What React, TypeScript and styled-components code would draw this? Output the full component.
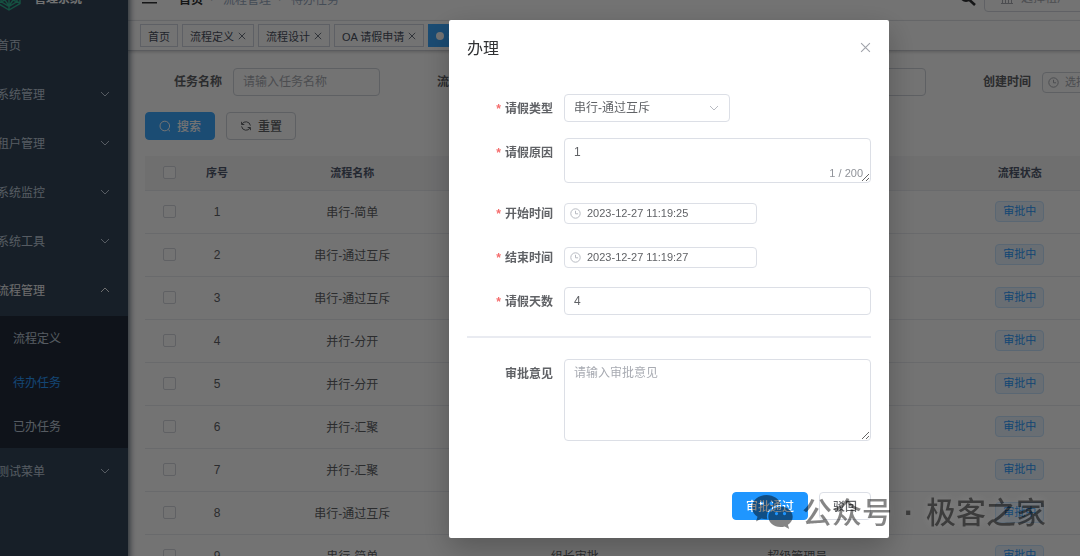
import React from 'react';
import styled, { createGlobalStyle, css } from 'styled-components';

const Global = createGlobalStyle`
  *, *::before, *::after { box-sizing: border-box; }
  body { margin: 0; background: #fff; overflow: hidden; }
  body, button, input, textarea, select {
    font-family: "Liberation Sans", "Noto Sans CJK SC", sans-serif;
    font-size: 12px;
    color: #606266;
  }
  button { cursor: pointer; }
  a { color: inherit; text-decoration: none; }
`;

/* ---------- page shell ---------- */

const Page = styled.div`
  height: 100vh;
  overflow: hidden;
`;

const Shell = styled.div`
  display: flex;
  min-height: 100vh;
  margin: -24px 0 0 -48px;
`;

const Sidebar = styled.aside`
  flex: 0 0 176px;
  min-height: calc(100vh + 24px);
  background: #34465a;
  box-shadow: 2px 0 6px rgba(0, 21, 41, 0.6);
  z-index: 1;
`;

const Brand = styled.div`
  display: flex;
  align-items: center;
  gap: 12px;
  height: 46px;
  padding: 0 0 4px 44px;
  color: #fff;
  font-weight: 700;
`;

const menuRow = css`
  display: flex;
  align-items: center;
  width: 100%;
  border: 0;
  background: none;
  text-align: left;
`;

const MenuItem = styled.button<{ $open?: boolean }>`
  ${menuRow}
  justify-content: space-between;
  height: 49px;
  padding: 0 17px 4px 45px;
  color: ${(p) => (p.$open ? '#f4f4f5' : '#bfcbd9')};
`;

const SubMenu = styled.nav`
  background: #232c3a;
`;

const SubItem = styled.a<{ $active?: boolean }>`
  ${menuRow}
  height: 44px;
  padding: 0 0 2px 61px;
  color: ${(p) => (p.$active ? '#2b9bff' : '#bfcbd9')};
`;

const Main = styled.main`
  flex: 1 0 1020px;
  background: #fff;
`;

/* ---------- header ---------- */

const Header = styled.header`
  display: flex;
  align-items: center;
  height: 45px;
  padding: 0 24px 0 14px;
  border-bottom: 1px solid #e8eaee;
`;

const IconButton = styled.button`
  display: flex;
  padding: 0;
  border: 0;
  background: none;
  color: #303133;
`;

const Crumbs = styled.nav`
  display: flex;
  gap: 8px;
  margin: 0 auto 0 22px;
  color: #97a8be;
  a { color: #303133; font-weight: 700; }
  i { color: #c0c4cc; font-style: normal; width: 4px; }
`;

const Tenant = styled.label`
  display: flex;
  align-items: center;
  gap: 8px;
  width: 140px;
  height: 28px;
  margin-left: 8px;
  padding: 0 16px;
  border: 1px solid #d4d8e0;
  border-radius: 4px;
  color: #a8abb2;
  input { width: 84px; padding: 0; border: 0; outline: 0; background: none; }
  input::placeholder { color: #a8abb2; }
`;

const TagBar = styled.div`
  display: flex;
  gap: 4px;
  height: 30px;
  padding: 3px 12px;
  border-bottom: 1px solid #c8cad0;
  box-shadow: 0 1px 3px rgba(0, 0, 0, 0.2);
`;

const PageTag = styled.a<{ $active?: boolean }>`
  display: flex;
  align-items: center;
  gap: 4px;
  height: 23px;
  padding: 0 7px;
  border: 1px solid ${(p) => (p.$active ? '#3ca8ff' : '#d0d6e0')};
  background: ${(p) => (p.$active ? '#3ca8ff' : '#fff')};
  color: ${(p) => (p.$active ? '#fff' : '#495060')};
  font-size: 11px;
  white-space: nowrap;
`;

const Dot = styled.span`
  width: 8px;
  height: 8px;
  border-radius: 50%;
  background: #fff;
`;

/* ---------- list page ---------- */

const Content = styled.div`
  padding: 17px;
`;

const Filters = styled.form`
  display: flex;
  gap: 28px;
  margin-bottom: 16px;
`;

const Filter = styled.label`
  display: flex;
  align-items: center;
  flex: none;
  gap: 11px;
  height: 28px;
  padding-left: 29px;
  font-weight: 700;
  line-height: 16px;
`;

const control = css`
  border: 1px solid #dcdfe6;
  border-radius: 4px;
  background: #fff;
  outline: 0;
  &::placeholder { color: #a8abb2; }
`;

const TextInput = styled.input<{ $width?: number }>`
  ${control}
  width: ${(p) => (p.$width ? `${p.$width}px` : '100%')};
  height: 28px;
  padding: 0 9px;
`;

const FilterInput = styled(TextInput)`
  border-color: #d0d4dc;
`;

const DateBox = styled.span<{ $dim?: boolean }>`
  ${control}
  display: flex;
  align-items: center;
  gap: 6px;
  width: 193px;
  height: 21px;
  padding: 0 5px;
  color: ${(p) => (p.$dim ? '#a8abb2' : '#b8bbc2')};
  border-color: ${(p) => (p.$dim ? '#d0d4dc' : '#dcdfe6')};
  input {
    width: 150px;
    padding: 0;
    border: 0;
    outline: 0;
    background: none;
    font-size: 11px;
  }
  input::placeholder { color: #a8abb2; }
`;

const Actions = styled.div`
  display: flex;
  gap: 11px;
  margin-bottom: 16px;
`;

const Button = styled.button<{ $primary?: boolean; $dim?: boolean }>`
  display: inline-flex;
  align-items: center;
  justify-content: center;
  gap: 6px;
  height: 28px;
  padding: 0 13px 1px;
  border: 1px solid ${(p) => (p.$primary ? (p.$dim ? '#3ca8ff' : '#1f96ff') : p.$dim ? '#d0d4dc' : '#dcdfe6')};
  border-radius: 4px;
  background: ${(p) => (p.$primary ? (p.$dim ? '#3ca8ff' : '#1f96ff') : '#fff')};
  color: ${(p) => (p.$primary ? '#fff' : '#606266')};
  font-weight: 500;
`;

const Table = styled.table`
  width: 100%;
  min-width: 986px;
  border-collapse: separate;
  border-spacing: 0;
  table-layout: fixed;
  text-align: center;
  th {
    height: 35px;
    padding: 0 0 2px;
    background: #f6f6f7;
    border-bottom: 1px solid #e9ebf0;
    color: #515a6e;
    font-size: 11px;
  }
  td {
    height: 43px;
    padding: 0 0 1px;
    border-bottom: 1px solid #e9ebf0;
  }
`;

const Narrow = styled.col`
  width: 48px;
`;

const Check = styled.input`
  appearance: none;
  display: block;
  width: 13px;
  height: 13px;
  margin: 0 auto;
  border: 1px solid #d4d7de;
  border-radius: 2px;
  background: #fff;
`;

const Status = styled.span`
  display: inline-block;
  height: 21px;
  padding: 0 7px;
  border: 1px solid #c8e4ff;
  border-radius: 4px;
  background: #e8f4ff;
  color: #2b9bff;
  font-size: 11px;
  line-height: 19px;
`;

/* ---------- dialog ---------- */

const Overlay = styled.div`
  position: fixed;
  inset: 0;
  z-index: 10;
  display: flex;
  justify-content: center;
  align-items: flex-start;
  padding: 20px 0 0 258px;
  background: rgba(0, 0, 0, 0.55);
`;

const Dialog = styled.section`
  width: 440px;
  padding: 18px;
  border-radius: 2px;
  background: #fff;
  box-shadow: 0 10px 30px rgba(0, 0, 0, 0.25);
`;

const DialogHead = styled.div`
  display: flex;
  align-items: center;
  justify-content: space-between;
  height: 18px;
  margin-bottom: 38px;
  h2 { margin: 0; color: #303133; font-size: 16px; font-weight: 400; }
  button { color: #a0a3aa; }
`;

const Field = styled.div`
  display: flex;
  align-items: flex-start;
  min-height: 28px;
  margin-bottom: 16px;
`;

const FieldLabel = styled.label<{ $required?: boolean }>`
  flex: 0 0 97px;
  padding: 2px 11px 0 0;
  font-weight: 700;
  line-height: 26px;
  text-align: right;
  ${(p) =>
    p.$required &&
    css`
      &::before { content: '*'; margin-right: 4px; color: #f56c6c; }
    `}
`;

const FieldBody = styled.div`
  position: relative;
  display: flex;
  flex: 1;
  align-items: center;
  height: min-content;
  min-height: 28px;
`;

const SelectWrap = styled.span`
  position: relative;
  width: 166px;
  select {
    ${control}
    appearance: none;
    display: block;
    width: 100%;
    height: 28px;
    padding: 0 9px;
  }
  svg {
    position: absolute;
    top: 8px;
    right: 10px;
    color: #b8bbc2;
    pointer-events: none;
  }
`;

const TextArea = styled.textarea<{ $height: number }>`
  ${control}
  display: block;
  width: 100%;
  height: ${(p) => p.$height}px;
  padding: 4px 9px;
  line-height: 18px;
  resize: vertical;
  overflow: hidden;
`;

const Counter = styled.span`
  position: absolute;
  right: 8px;
  bottom: 4px;
  color: #909399;
  font-size: 11px;
  line-height: 12px;
`;

const Divider = styled.hr`
  height: 2px;
  margin: 21px 0;
  border: 0;
  background: #e9ebf1;
`;

const DialogFoot = styled.div`
  display: flex;
  justify-content: flex-end;
  gap: 11px;
  margin-top: 51px;
`;

const Watermark = styled.div`
  position: fixed;
  right: 34px;
  bottom: 20px;
  z-index: 20;
  display: flex;
  align-items: center;
  gap: 8px;
  color: #000;
  font-size: 30px;
  font-weight: 500;
  line-height: 46px;
  opacity: 0.48;
  pointer-events: none;
  text-shadow: 0 0 10px rgba(255, 255, 255, 0.3);
  b { width: 18px; font-weight: 700; text-align: center; }
  svg { margin-bottom: 3px; }
`;

/* ---------- icons ---------- */

const Chevron = ({ up }: { up?: boolean }) => (
  <svg width="12" height="12" viewBox="0 0 12 12" fill="none" stroke="currentColor">
    <path d={up ? 'M2 8l4-4 4 4' : 'M2 4l4 4 4-4'} />
  </svg>
);

const Cross = ({ size }: { size: number }) => (
  <svg width={size} height={size} viewBox="0 0 10 10" fill="none" stroke="currentColor">
    <path d="M1 1l8 8M9 1l-8 8" />
  </svg>
);

const Clock = () => (
  <svg width="11" height="11" viewBox="0 0 11 11" fill="none" stroke="currentColor">
    <circle cx="5.5" cy="5.5" r="4.7" />
    <path d="M5.5 2.8v3h2.6" />
  </svg>
);

const SearchThin = () => (
  <svg width="12" height="12" viewBox="0 0 12 12" fill="none" stroke="currentColor">
    <circle cx="5.8" cy="6" r="4.8" />
    <path d="M9.200 9.500l1.800 1.800" />
  </svg>
);

const Refresh = () => (
  <svg width="12" height="12" viewBox="0 0 12 12" fill="none" stroke="currentColor">
    <path d="M1.600 1.800v2.700h2.700M1.900 4.300A4.500 4.500 0 0 1 10.400 5.600M10.400 10.200V7.500H7.700M10.100 7.700A4.500 4.500 0 0 1 1.600 6.400" />
  </svg>
);

const Hamburger = () => (
  <svg width="15" height="12" viewBox="0 0 15 12" fill="none" stroke="currentColor" strokeWidth="1.6">
    <path d="M0 1h15M2 6h13M0 10.700h15" />
  </svg>
);

const SearchBold = () => (
  <svg width="17" height="16" viewBox="0 0 17 16" fill="none" stroke="currentColor" strokeWidth="2">
    <circle cx="7" cy="6" r="5" />
    <path d="M10.500 10l5.500 5" strokeWidth="2.6" />
  </svg>
);

const Building = () => (
  <svg width="12" height="12" viewBox="0 0 12 12" fill="none" stroke="currentColor">
    <path d="M0 11.500h12M1.500 11V4.500M4.500 11V4.500M7.500 11V4.500M10.500 11V4.500M0 4.500h12L6 1z" />
  </svg>
);

const Logo = () => (
  <svg width="26" height="28" viewBox="0 0 26 28" fill="none" stroke="#2fb491" strokeWidth="1.4">
    <path d="M13 1l11 6.500v13L13 27 2 20.500v-13zM5 9v9.500l8 5 8-5V9M9 12v5l4 6 4-6v-5M13 14v13M2 20l7-3M24 20l-7-3" />
  </svg>
);

const WeChat = () => (
  <svg width="42" height="34" viewBox="0 0 42 34" fill="currentColor">
    <path
      fillRule="evenodd"
      d="M14.500 0C6.500 0 0 5.400 0 12.200c0 3.900 2.100 7.300 5.500 9.500L4 26.500l5.400-2.900c1.600.5 3.300.7 5.100.7h.9a10 10 0 0 1-.5-3c0-6.300 6-11.300 13.300-11.300h.8C27.600 4.300 21.700 0 14.500 0zM9.700 6.400a1.900 1.900 0 1 1 0 3.800 1.900 1.900 0 0 1 0-3.800zm9.700 0a1.900 1.900 0 1 1 0 3.800 1.900 1.900 0 0 1 0-3.800z"
    />
    <path
      fillRule="evenodd"
      d="M28.500 11.500c-6.800 0-12.200 4.600-12.200 10.200S21.700 32 28.500 32c1.500 0 2.900-.2 4.200-.6l4.500 2.600-1.300-4.200c2.900-1.900 4.800-4.800 4.800-8.100 0-5.600-5.400-10.200-12.200-10.200zm-4 5.500a1.600 1.600 0 1 1 0 3.200 1.600 1.600 0 0 1 0-3.200zm8 0a1.600 1.600 0 1 1 0 3.200 1.600 1.600 0 0 1 0-3.200z"
    />
  </svg>
);

/* ---------- data ---------- */

const menus = ['系统管理', '租户管理', '系统监控', '系统工具'];
const openTags = ['流程定义', '流程设计', 'OA 请假申请'];
const columns = ['流程名称', '任务名称', '办理人', '流程状态'];
const flows = [
  '串行-简单',
  '串行-通过互斥',
  '串行-通过互斥',
  '并行-分开',
  '并行-分开',
  '并行-汇聚',
  '并行-汇聚',
  '串行-通过互斥',
  '串行-简单',
];

export default function App() {
  return (
    <Page>
      <Global />
      <Shell>
        <Sidebar>
          <Brand>
            <Logo />
            管理系统
          </Brand>
          <MenuItem>首页</MenuItem>
          {menus.map((m) => (
            <MenuItem key={m}>
              {m}
              <Chevron />
            </MenuItem>
          ))}
          <MenuItem $open>
            流程管理
            <Chevron up />
          </MenuItem>
          <SubMenu>
            <SubItem href="#definition">流程定义</SubItem>
            <SubItem href="#todo" $active>待办任务</SubItem>
            <SubItem href="#done">已办任务</SubItem>
          </SubMenu>
          <MenuItem>
            测试菜单
            <Chevron />
          </MenuItem>
        </Sidebar>

        <Main>
          <Header>
            <IconButton aria-label="折叠菜单"><Hamburger /></IconButton>
            <Crumbs>
              <a href="#home">首页</a>
              <i>/</i>
              <span>流程管理</span>
              <i>/</i>
              <span>待办任务</span>
            </Crumbs>
            <IconButton aria-label="搜索"><SearchBold /></IconButton>
            <Tenant>
              <Building />
              <input aria-label="租户" placeholder="选择租户" />
            </Tenant>
          </Header>
          <TagBar>
            <PageTag href="#home">首页</PageTag>
            {openTags.map((t) => (
              <PageTag key={t} href={`#${t}`}>
                {t}
                <Cross size={8} />
              </PageTag>
            ))}
            <PageTag href="#todo" $active>
              <Dot />
              待办任务
              <Cross size={8} />
            </PageTag>
          </TagBar>

          <Content>
            <Filters>
              <Filter>
                任务名称
                <FilterInput $width={147} placeholder="请输入任务名称" />
              </Filter>
              <Filter>
                流程名称
                <FilterInput $width={147} />
              </Filter>
              <Filter>
                流程状态
                <FilterInput $width={167} />
              </Filter>
              <Filter>
                创建时间
                <DateBox $dim>
                  <Clock />
                  <input placeholder="选择创建时间" />
                </DateBox>
              </Filter>
            </Filters>
            <Actions>
              <Button $primary $dim><SearchThin />搜索</Button>
              <Button $dim><Refresh />重置</Button>
            </Actions>
            <Table>
              <colgroup>
                <Narrow />
                <Narrow />
                {columns.map((c) => <col key={c} />)}
              </colgroup>
              <thead>
                <tr>
                  <th><Check type="checkbox" aria-label="全选" /></th>
                  <th>序号</th>
                  {columns.map((c) => <th key={c}>{c}</th>)}
                </tr>
              </thead>
              <tbody>
                {flows.map((name, i) => (
                  <tr key={i}>
                    <td><Check type="checkbox" aria-label={`选择第 ${i + 1} 行`} /></td>
                    <td>{i + 1}</td>
                    <td>{name}</td>
                    <td>组长审批</td>
                    <td>超级管理员</td>
                    <td><Status>审批中</Status></td>
                  </tr>
                ))}
              </tbody>
            </Table>
          </Content>
        </Main>
      </Shell>

      <Overlay>
        <Dialog role="dialog" aria-labelledby="dialog-title">
          <DialogHead>
            <h2 id="dialog-title">办理</h2>
            <IconButton aria-label="关闭"><Cross size={11} /></IconButton>
          </DialogHead>
          <Field>
            <FieldLabel $required htmlFor="type">请假类型</FieldLabel>
            <FieldBody>
              <SelectWrap>
                <select id="type">
                  <option>串行-通过互斥</option>
                </select>
                <Chevron />
              </SelectWrap>
            </FieldBody>
          </Field>
          <Field>
            <FieldLabel $required htmlFor="reason">请假原因</FieldLabel>
            <FieldBody>
              <TextArea id="reason" $height={45} maxLength={200} defaultValue="1" />
              <Counter>1 / 200</Counter>
            </FieldBody>
          </Field>
          <Field>
            <FieldLabel $required htmlFor="start">开始时间</FieldLabel>
            <FieldBody>
              <DateBox><Clock /><input id="start" defaultValue="2023-12-27 11:19:25" /></DateBox>
            </FieldBody>
          </Field>
          <Field>
            <FieldLabel $required htmlFor="end">结束时间</FieldLabel>
            <FieldBody>
              <DateBox><Clock /><input id="end" defaultValue="2023-12-27 11:19:27" /></DateBox>
            </FieldBody>
          </Field>
          <Field>
            <FieldLabel $required htmlFor="days">请假天数</FieldLabel>
            <FieldBody><TextInput id="days" defaultValue="4" /></FieldBody>
          </Field>
          <Divider />
          <Field>
            <FieldLabel htmlFor="opinion">审批意见</FieldLabel>
            <FieldBody>
              <TextArea id="opinion" $height={82} placeholder="请输入审批意见" />
            </FieldBody>
          </Field>
          <DialogFoot>
            <Button $primary>审批通过</Button>
            <Button>驳回</Button>
          </DialogFoot>
        </Dialog>
      </Overlay>

      <Watermark>
        <WeChat />
        <span>公众号</span>
        <b>·</b>
        <span>极客之家</span>
      </Watermark>
    </Page>
  );
}
